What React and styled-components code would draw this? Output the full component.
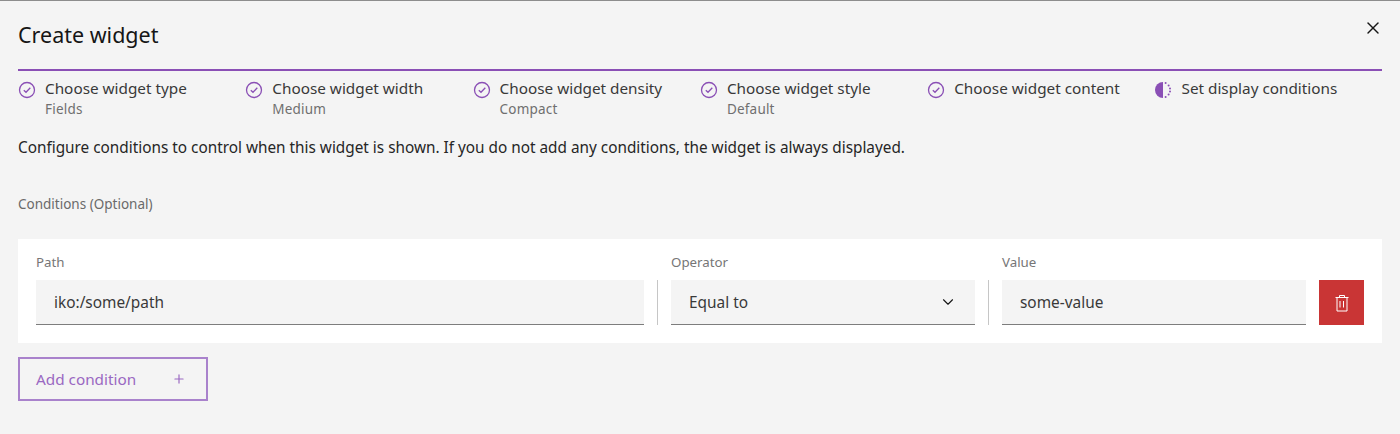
import React from "react";
import styled, { createGlobalStyle } from "styled-components";
import { ChevronDown, Plus, X } from "lucide-react";

const GlobalStyle = createGlobalStyle`
  html, body {
    margin: 0;
    padding: 0;
    background: #f4f4f4;
  }
  * {
    box-sizing: border-box;
  }
`;

const Modal = styled.div`
  position: relative;
  width: 1400px;
  height: 434px;
  overflow: hidden;
  padding: 0 18px;
  background: #f4f4f4;
  border-top: 1px solid #8d8d8d;
  font-family: "Noto Sans", "Open Sans", sans-serif;
  color: #161616;
`;

const Title = styled.h2`
  margin: 0;
  padding-top: 20px;
  height: 68px;
  font-size: 21.5px;
  line-height: 28px;
  font-weight: 400;
`;

const CloseButton = styled.button`
  position: absolute;
  top: 17px;
  right: 17px;
  width: 20px;
  height: 20px;
  padding: 0;
  display: flex;
  background: none;
  border: 0;
  color: #161616;
`;

const Steps = styled.ol`
  display: flex;
  margin: 0;
  padding: 8px 0 0;
  height: 69px;
  list-style: none;
  border-top: 2px solid #8a4fb5;
`;

const Step = styled.li`
  display: flex;
  width: 227.3px;
  gap: 9px;
`;

const StepIcon = styled.svg`
  flex: none;
  width: 18px;
  height: 18px;
  margin-top: 2px;
`;

const StepLabel = styled.div`
  font-size: 15.3px;
  line-height: 18px;
  color: #393939;
  white-space: nowrap;
`;

const StepNote = styled.div`
  margin-top: 3px;
  font-size: 13.5px;
  line-height: 18px;
  letter-spacing: 0.2px;
  color: #6f6f6f;
`;

const Description = styled.p`
  margin: 0;
  height: 55px;
  font-size: 15.33px;
  line-height: 18px;
  color: #262626;
`;

const SectionLabel = styled.div`
  height: 46px;
  padding-top: 2px;
  font-size: 13.5px;
  line-height: 18px;
  color: #6a6a6a;
`;

const ConditionCard = styled.div`
  display: flex;
  align-items: flex-end;
  height: 104px;
  padding: 0 18px 18px;
  background: #fff;
`;

const Field = styled.label`
  display: flex;
  flex-direction: column;
  width: ${props => props.$width}px;
`;

const FieldLabel = styled.span`
  margin-bottom: 10px;
  font-size: 13.3px;
  line-height: 16px;
  color: #767676;
`;

const InputBox = styled.div`
  display: flex;
  align-items: center;
  justify-content: space-between;
  height: 45px;
  padding: 0 18px;
  background: #f4f4f4;
  border-bottom: 1px solid #7d7d7d;
  font-size: 15.4px;
  color: #393939;
`;

const Separator = styled.div`
  flex: none;
  width: 1px;
  height: 45px;
  margin: 0 13px;
  background: #c6c6c6;
`;

const DeleteButton = styled.button`
  flex: none;
  display: flex;
  align-items: center;
  justify-content: center;
  width: 45px;
  height: 45px;
  margin-left: 13px;
  padding: 0;
  border: 0;
  background: #c93535;
`;

const AddButton = styled.button`
  display: flex;
  align-items: center;
  justify-content: space-between;
  width: 190px;
  height: 44px;
  margin-top: 14px;
  padding: 0 20px 0 16px;
  background: transparent;
  border: 2px solid #a982cc;
  font-family: inherit;
  font-size: 15.3px;
  color: #9a68c2;
`;

const steps = [
  { label: "Choose widget type", note: "Fields" },
  { label: "Choose widget width", note: "Medium" },
  { label: "Choose widget density", note: "Compact" },
  { label: "Choose widget style", note: "Default" },
  { label: "Choose widget content" },
  { label: "Set display conditions", current: true },
];

function DoneIcon() {
  return (
    <StepIcon viewBox="0 0 18 18" fill="none" stroke="#8a4fb5" strokeWidth="1.3">
      <circle cx="9" cy="9" r="7.5" />
      <path d="M5.8 9.2 8 11.3 12.3 6.8" />
    </StepIcon>
  );
}

function CurrentIcon() {
  return (
    <StepIcon viewBox="0 0 18 18">
      <path d="M9 1a8 8 0 0 0 0 16z" fill="#8a4fb5" />
      <g fill="#8a4fb5">
        <circle cx="11.6" cy="2" r="1" />
        <circle cx="14.6" cy="4.4" r="1" />
        <circle cx="16" cy="7.6" r="1" />
        <circle cx="16" cy="10.6" r="1" />
        <circle cx="14.6" cy="13.6" r="1" />
        <circle cx="11.6" cy="16" r="1" />
      </g>
    </StepIcon>
  );
}

function TrashIcon() {
  return (
    <svg width="14" height="18" viewBox="0 0 14 18" fill="none" stroke="#fff">
      <path d="M0.5 3.5h13M4.5 3.5v-2h5v2M2 3.5v13.5h10V3.5M5 7v6.5M8.5 7v6.5" />
    </svg>
  );
}

export default function App() {
  return (
    <Modal>
      <GlobalStyle />
      <Title>Create widget</Title>
      <CloseButton aria-label="Close">
        <X size={20} strokeWidth={1.7} />
      </CloseButton>
      <Steps>
        {steps.map(step => (
          <Step key={step.label}>
            {step.current ? <CurrentIcon /> : <DoneIcon />}
            <div>
              <StepLabel>{step.label}</StepLabel>
              {step.note && <StepNote>{step.note}</StepNote>}
            </div>
          </Step>
        ))}
      </Steps>
      <Description>
        Configure conditions to control when this widget is shown. If you do
        not add any conditions, the widget is always displayed.
      </Description>
      <SectionLabel>Conditions (Optional)</SectionLabel>
      <ConditionCard>
        <Field $width={608}>
          <FieldLabel>Path</FieldLabel>
          <InputBox>iko:/some/path</InputBox>
        </Field>
        <Separator />
        <Field $width={304}>
          <FieldLabel>Operator</FieldLabel>
          <InputBox>
            Equal to
            <ChevronDown size={18} strokeWidth={1.5} color="#161616" />
          </InputBox>
        </Field>
        <Separator />
        <Field $width={304}>
          <FieldLabel>Value</FieldLabel>
          <InputBox>some-value</InputBox>
        </Field>
        <DeleteButton aria-label="Delete">
          <TrashIcon />
        </DeleteButton>
      </ConditionCard>
      <AddButton>
        Add condition
        <Plus size={14} strokeWidth={2} />
      </AddButton>
    </Modal>
  );
}
